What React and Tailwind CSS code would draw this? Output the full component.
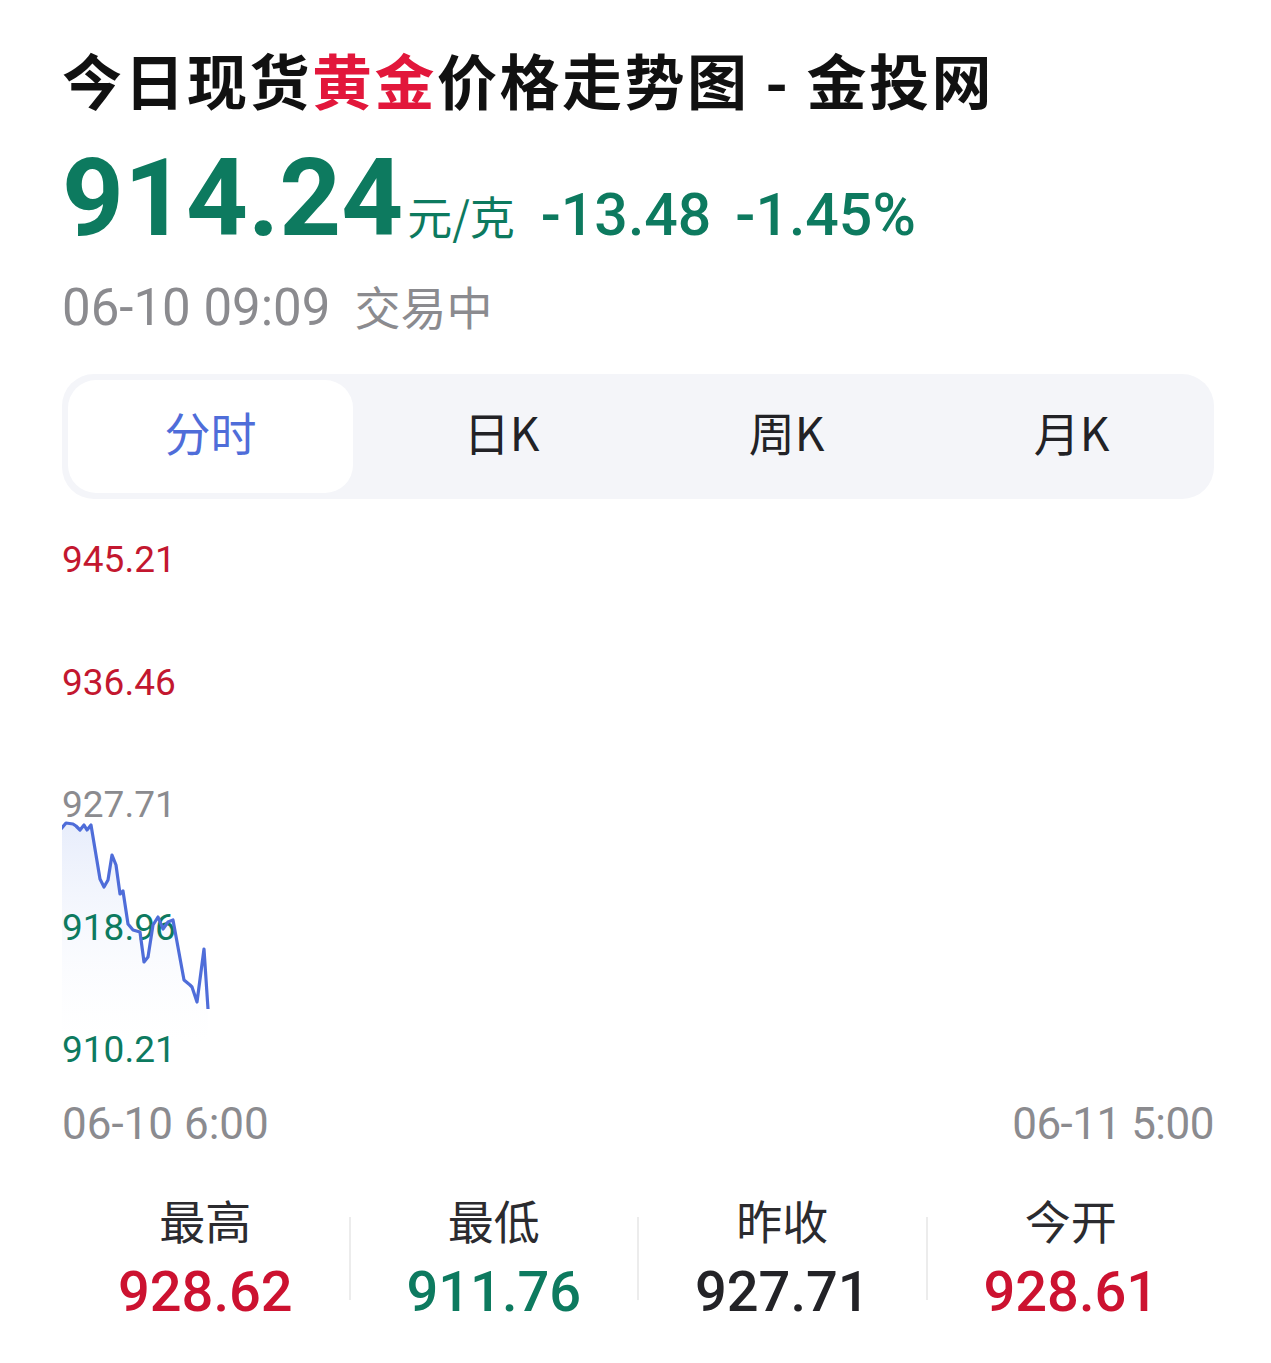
const linePts = [
  [61, 827], [66, 821], [73, 822], [76, 824], [80, 828], [84, 823], [87, 828], [91, 823],
  [100, 877], [104, 885], [108, 878], [112, 853], [116, 863], [120, 892], [123, 889],
  [128, 922], [133, 928], [140, 930], [144, 960], [148, 955], [153, 923], [158, 915],
  [163, 927], [168, 920], [173, 918], [184, 978], [190, 983], [192, 985], [197, 1000],
  [204, 947], [208, 1007],
];

const yLabels = [
  { v: "945.21", c: "text-[#c3172f]" },
  { v: "936.46", c: "text-[#c3172f]" },
  { v: "927.71", c: "text-[#8b8b8f]" },
  { v: "918.96", c: "text-[#0d7a5f]" },
  { v: "910.21", c: "text-[#0d7a5f]" },
];

const stats = [
  { label: "最高", value: "928.62", c: "text-[#cc1230]" },
  { label: "最低", value: "911.76", c: "text-[#0d7a5f]" },
  { label: "昨收", value: "927.71", c: "text-[#232327]" },
  { label: "今开", value: "928.61", c: "text-[#cc1230]" },
];

const tabs = ["分时", "日K", "周K", "月K"];

const num = { fontFamily: "Roboto, 'Liberation Sans', sans-serif" };
const cjk = { fontFamily: "'Noto Sans CJK SC', 'Noto Sans', sans-serif" };

function PriceChart() {
  const line = linePts.map(p => p.join(",")).join(" ");
  const area = `${line} 208,1040 61,1040`;

  return (
    <div className="relative mt-[42px]">
      {/* area fill sits behind the axis labels, the line on top */}
      <svg className="absolute left-0 top-0" width="1152" height="527" viewBox="62 539 1152 527">
        <defs>
          <linearGradient id="fill" x1="0" y1="0" x2="0" y2="1">
            <stop offset="0%" stopColor="#e6ecfb" stopOpacity="0.95" />
            <stop offset="100%" stopColor="#ffffff" stopOpacity="0.3" />
          </linearGradient>
        </defs>
        <polygon points={area} fill="url(#fill)" />
      </svg>
      <div className="relative flex flex-col gap-[85.5px]">
        {yLabels.map(l => (
          <div key={l.v} className={`text-[37px] leading-none ${l.c}`} style={num}>
            {l.v}
          </div>
        ))}
      </div>
      <svg className="absolute left-0 top-0" width="1152" height="527" viewBox="62 539 1152 527">
        <polyline
          points={line}
          fill="none"
          stroke="#4f6dd9"
          strokeWidth="3.2"
          strokeLinejoin="round"
        />
      </svg>
    </div>
  );
}

export default function App() {
  return (
    <div className="w-[1271px] h-[1363px] bg-white pl-[62px] pr-[57px] pt-[49px]">
      <h1 className="text-[60px] leading-[60px] font-bold tracking-[2.5px] text-[#111]" style={cjk}>
        今日现货<span className="text-[#e2173b]">黄金</span>价格走势图 - 金投网
      </h1>

      <div className="mt-[35px] flex items-baseline text-[#0d7a5f]">
        <span className="text-[108px] leading-none font-bold" style={num}>914.24</span>
        <span className="ml-[4px] text-[45px] leading-none" style={cjk}>元/克</span>
        <span className="ml-[26px] text-[59px] leading-none font-medium" style={num}>-13.48</span>
        <span className="ml-[24px] text-[59px] leading-none font-medium" style={num}>-1.45%</span>
      </div>

      <div className="mt-[30px] flex items-baseline text-[#8b8b8f]">
        <span className="text-[51px] leading-none" style={num}>06-10 09:09</span>
        <span className="ml-[24px] text-[46px] leading-none" style={cjk}>交易中</span>
      </div>

      <div className="mt-[41px] h-[125px] rounded-[32px] bg-[#f4f5f9] p-[6px] grid grid-cols-4">
        {tabs.map((t, i) => (
          <div
            key={t}
            className={
              i === 0
                ? "flex items-center justify-center pb-[10px] rounded-[28px] bg-white text-[46px] text-[#4f6dd9]"
                : "flex items-center justify-center pb-[10px] pl-[12px] text-[46px] text-[#222226]"
            }
            style={cjk}
          >
            {t}
          </div>
        ))}
      </div>

      <PriceChart />

      <div className="mt-[34px] flex justify-between text-[44px] leading-none text-[#8b8b8f]" style={num}>
        <span>06-10 6:00</span>
        <span className="tracking-[-0.5px]">06-11 5:00</span>
      </div>

      <div className="mt-[50px] flex items-center">
        {stats.map((s, i) => (
          <div key={s.label} className="contents">
            {i > 0 && <div className="w-[2px] h-[83px] bg-[#ececec]" />}
            <div className="flex-1 flex flex-col items-center">
              <div className="text-[46px] leading-none text-[#2b2b2f]" style={cjk}>{s.label}</div>
              <div className={`mt-[22px] text-[56px] leading-none font-medium ${s.c}`} style={num}>
                {s.value}
              </div>
            </div>
          </div>
        ))}
      </div>
    </div>
  );
}
